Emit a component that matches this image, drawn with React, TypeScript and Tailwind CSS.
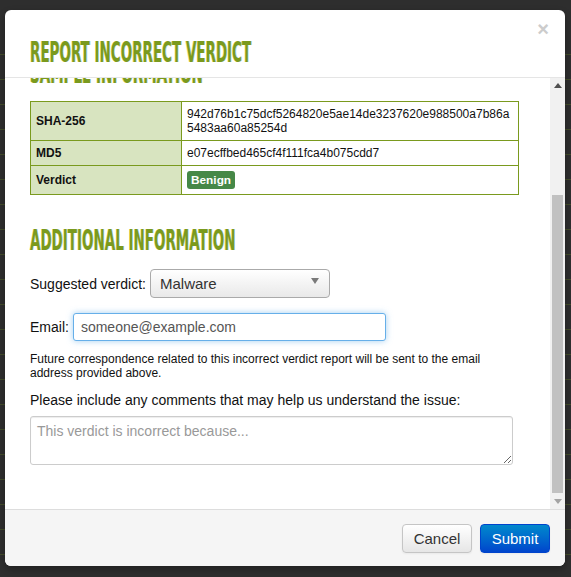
import React from "react";

const headingFont =
  "font-['Liberation_Sans_Narrow','DejaVu_Sans_Condensed','Liberation_Sans',sans-serif]";

function Heading({ text, className = "" }: { text: string; className?: string }) {
  return (
    <div className={`h-[28px] whitespace-nowrap ${className}`}>
      <span
        className={`inline-block origin-left scale-x-[0.535] ${headingFont} text-[28px] leading-[28px] font-bold text-[#7a9a1e] [text-shadow:-1px_0_rgba(226,206,60,0.55),1px_0_rgba(120,185,215,0.45)]`}
      >
        {text}
      </span>
    </div>
  );
}

function Scrollbar() {
  return (
    <div className="w-[15px] bg-[#f1f1f1] flex flex-col">
      <div className="h-[15px] flex items-center justify-center">
        <svg width="8" height="5" viewBox="0 0 8 5">
          <path d="M0 5 L4 0 L8 5 Z" fill="#505050" />
        </svg>
      </div>
      <div className="h-[102px]" />
      <div className="h-[298px] mx-[2px] bg-[#c1c1c1]" />
      <div className="flex-1" />
      <div className="h-[15px] flex items-center justify-center">
        <svg width="8" height="5" viewBox="0 0 8 5">
          <path d="M0 0 L4 5 L8 0 Z" fill="#a3a3a3" />
        </svg>
      </div>
    </div>
  );
}

export default function App() {
  const rows = Array.from({ length: 22 });

  return (
    <div className="relative w-[571px] h-[577px] overflow-hidden bg-[#2e2e2e] font-['Liberation_Sans',Arial,sans-serif]">
      <div className="pt-[30px] flex flex-col">
        {rows.map((_, i) => (
          <div key={i} className="h-[25px] border-b border-[#434c2a]" />
        ))}
      </div>

      <div className="absolute left-[5px] top-[10px] w-[560px] h-[556px] bg-white rounded-[6px] overflow-hidden flex flex-col shadow-[0_3px_7px_rgba(0,0,0,0.3)]">
        <div className="h-[68px] shrink-0 border-b border-[#e5e5e5] flex justify-between pl-[25px] pr-[16px]">
          <Heading text="REPORT INCORRECT VERDICT" className="mt-[29px]" />
          <button className="mt-[9px] h-[20px] text-[20px] leading-[20px] font-bold text-[#cccccc]">
            ×
          </button>
        </div>

        <div className="flex-1 flex min-h-0">
          <div className="flex-1 overflow-hidden pl-[25px] pr-[31px]">
            <Heading text="SAMPLE INFORMATION" className="-mt-[18px]" />

            <table className="mt-[13px] w-full border-collapse border border-[#7a9a1e] text-[12px] leading-[14px] text-[#111]">
              <tbody>
                <tr>
                  <td className="w-[151px] bg-[#d8e4c0] border border-[#7a9a1e] px-[5px] py-[5px] font-bold align-middle">
                    SHA-256
                  </td>
                  <td className="border border-[#7a9a1e] px-[5px] py-[5px] break-all">
                    942d76b1c75dcf5264820e5ae14de3237620e988500a7b86a
                    <br />
                    5483aa60a85254d
                  </td>
                </tr>
                <tr>
                  <td className="bg-[#d8e4c0] border border-[#7a9a1e] px-[5px] py-[5px] font-bold">
                    MD5
                  </td>
                  <td className="border border-[#7a9a1e] px-[5px] py-[5px]">
                    e07ecffbed465cf4f111fca4b075cdd7
                  </td>
                </tr>
                <tr>
                  <td className="bg-[#d8e4c0] border border-[#7a9a1e] px-[5px] py-[5px] font-bold">
                    Verdict
                  </td>
                  <td className="border border-[#7a9a1e] px-[5px] py-[5px]">
                    <span className="inline-block align-middle bg-[#468847] text-white font-bold text-[11.844px] leading-[14px] px-[4px] py-[2px] rounded-[3px]">
                      Benign
                    </span>
                  </td>
                </tr>
              </tbody>
            </table>

            <Heading text="ADDITIONAL INFORMATION" className="mt-[32px]" />

            <div className="mt-[14px] flex items-center gap-[4px] text-[14px] leading-[20px] text-[#111]">
              <span>Suggested verdict:</span>
              <div className="relative w-[180px] h-[29px] rounded-[4px] border border-[#aaaaaa] bg-gradient-to-b from-white to-[#e9e9e9] flex items-center pl-[9px] text-[15px] text-[#333]">
                Malware
                <svg
                  className="absolute right-[10px] top-[8px]"
                  width="8"
                  height="6"
                  viewBox="0 0 8 6"
                >
                  <path d="M0 0 L8 0 L4 6 Z" fill="#7a7a7a" />
                </svg>
              </div>
            </div>

            <div className="mt-[15px] flex items-center gap-[4px] text-[14px] leading-[20px] text-[#111]">
              <span>Email:</span>
              <input
                className="w-[313px] h-[28px] rounded-[3px] border border-[#66afe9] bg-white px-[7px] text-[14px] text-[#333] outline-none shadow-[0_0_6px_rgba(102,175,233,0.6)] placeholder:text-[#555] font-['Liberation_Sans',Arial,sans-serif]"
                placeholder="someone@example.com"
              />
            </div>

            <p className="mt-[11px] text-[12px] leading-[14px] text-[#111]">
              Future correspondence related to this incorrect verdict report will be sent to the email
              <br />
              address provided above.
            </p>

            <p className="mt-[10px] text-[14px] leading-[20px] text-[#111]">
              Please include any comments that may help us understand the issue:
            </p>

            <textarea
              className="mt-[6px] block w-[483px] h-[49px] rounded-[3px] border border-[#cccccc] px-[6px] py-[4px] text-[14px] leading-[20px] outline-none placeholder:text-[#999] shadow-[inset_0_1px_1px_rgba(0,0,0,0.075)] font-['Liberation_Sans',Arial,sans-serif]"
              placeholder="This verdict is incorrect because..."
            />
          </div>
          <Scrollbar />
        </div>

        <div className="h-[57px] shrink-0 bg-[#f5f5f5] border-t border-[#dddddd] flex justify-end items-start pt-[14px] pr-[15px] gap-[8px] text-[15px] leading-[20px]">
          <button className="w-[70px] h-[29px] rounded-[4px] border border-[#c5c5c5] bg-gradient-to-b from-white to-[#e6e6e6] text-[#333] shadow-[0_1px_2px_rgba(0,0,0,0.05)]">
            Cancel
          </button>
          <button className="w-[70px] h-[29px] rounded-[4px] border border-[#0044cc] bg-gradient-to-b from-[#0088cc] to-[#0044cc] text-white shadow-[0_1px_2px_rgba(0,0,0,0.05)]">
            Submit
          </button>
        </div>
      </div>
    </div>
  );
}
